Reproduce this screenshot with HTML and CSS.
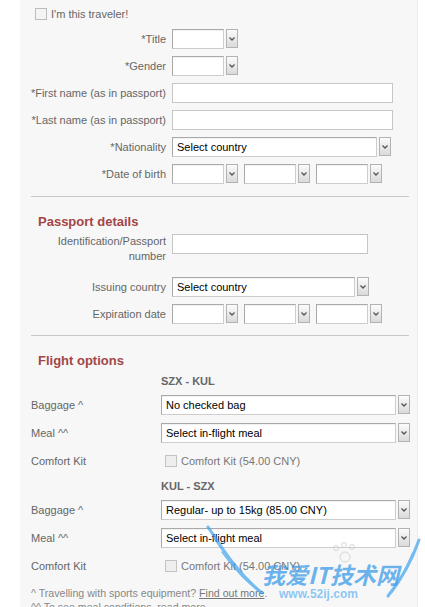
FILE: index.html
```html
<!DOCTYPE html>
<html>
<head>
<meta charset="utf-8">
<title>Traveler details</title>
<link rel="stylesheet" href="styles.css">
</head>
<body>
<div class="panel">
  <section class="traveler">
    <div class="me"><span class="cb"></span><span>I'm this traveler!</span></div>
    <div class="form">
      <div class="row"><span class="lbl">*Title</span><div class="fld"><span class="sel"><span class="box w52"></span><span class="btn"><svg width="6" height="4" viewBox="0 0 6 4"><polyline points="0.5,0.5 3,3 5.5,0.5" fill="none" stroke="#555" stroke-width="1.3"/></svg></span></span></div></div>
      <div class="row"><span class="lbl">*Gender</span><div class="fld"><span class="sel"><span class="box w52"></span><span class="btn"><svg width="6" height="4" viewBox="0 0 6 4"><polyline points="0.5,0.5 3,3 5.5,0.5" fill="none" stroke="#555" stroke-width="1.3"/></svg></span></span></div></div>
      <div class="row"><span class="lbl">*First name (as in passport)</span><div class="fld"><span class="inp w221"></span></div></div>
      <div class="row"><span class="lbl">*Last name (as in passport)</span><div class="fld"><span class="inp w221"></span></div></div>
      <div class="row"><span class="lbl">*Nationality</span><div class="fld"><span class="sel"><span class="box w205">Select country</span><span class="btn"><svg width="6" height="4" viewBox="0 0 6 4"><polyline points="0.5,0.5 3,3 5.5,0.5" fill="none" stroke="#555" stroke-width="1.3"/></svg></span></span></div></div>
      <div class="row"><span class="lbl">*Date of birth</span><div class="fld dates">
        <span class="sel"><span class="box w52"></span><span class="btn"><svg width="6" height="4" viewBox="0 0 6 4"><polyline points="0.5,0.5 3,3 5.5,0.5" fill="none" stroke="#555" stroke-width="1.3"/></svg></span></span>
        <span class="sel"><span class="box w52"></span><span class="btn"><svg width="6" height="4" viewBox="0 0 6 4"><polyline points="0.5,0.5 3,3 5.5,0.5" fill="none" stroke="#555" stroke-width="1.3"/></svg></span></span>
        <span class="sel"><span class="box w52"></span><span class="btn"><svg width="6" height="4" viewBox="0 0 6 4"><polyline points="0.5,0.5 3,3 5.5,0.5" fill="none" stroke="#555" stroke-width="1.3"/></svg></span></span>
      </div></div>
    </div>
  </section>

  <hr class="rule rule-1">

  <section class="passport">
    <h2 class="heading">Passport details</h2>
    <div class="form">
      <div class="row top tall"><span class="lbl">Identification/Passport<br>number</span><div class="fld"><span class="inp w196"></span></div></div>
      <div class="row"><span class="lbl">Issuing country</span><div class="fld"><span class="sel"><span class="box w183">Select country</span><span class="btn"><svg width="6" height="4" viewBox="0 0 6 4"><polyline points="0.5,0.5 3,3 5.5,0.5" fill="none" stroke="#555" stroke-width="1.3"/></svg></span></span></div></div>
      <div class="row"><span class="lbl">Expiration date</span><div class="fld dates">
        <span class="sel"><span class="box w52"></span><span class="btn"><svg width="6" height="4" viewBox="0 0 6 4"><polyline points="0.5,0.5 3,3 5.5,0.5" fill="none" stroke="#555" stroke-width="1.3"/></svg></span></span>
        <span class="sel"><span class="box w52"></span><span class="btn"><svg width="6" height="4" viewBox="0 0 6 4"><polyline points="0.5,0.5 3,3 5.5,0.5" fill="none" stroke="#555" stroke-width="1.3"/></svg></span></span>
        <span class="sel"><span class="box w52"></span><span class="btn"><svg width="6" height="4" viewBox="0 0 6 4"><polyline points="0.5,0.5 3,3 5.5,0.5" fill="none" stroke="#555" stroke-width="1.3"/></svg></span></span>
      </div></div>
    </div>
  </section>

  <hr class="rule rule-2">

  <section class="flight">
    <h2 class="heading">Flight options</h2>
    <div class="flist">
      <div class="frow route"><span></span><span>SZX - KUL</span></div>
      <div class="frow"><span class="flbl">Baggage ^</span><span class="sel"><span class="box w235">No checked bag</span><span class="btn"><svg width="6" height="4" viewBox="0 0 6 4"><polyline points="0.5,0.5 3,3 5.5,0.5" fill="none" stroke="#555" stroke-width="1.3"/></svg></span></span></div>
      <div class="frow"><span class="flbl">Meal ^^</span><span class="sel"><span class="box w235">Select in-flight meal</span><span class="btn"><svg width="6" height="4" viewBox="0 0 6 4"><polyline points="0.5,0.5 3,3 5.5,0.5" fill="none" stroke="#555" stroke-width="1.3"/></svg></span></span></div>
      <div class="frow"><span class="flbl">Comfort Kit</span><span class="kit"><span class="cb dis"></span><span>Comfort Kit (54.00 CNY)</span></span></div>

      <div class="frow route"><span></span><span>KUL - SZX</span></div>
      <div class="frow"><span class="flbl">Baggage ^</span><span class="sel"><span class="box w235">Regular- up to 15kg (85.00 CNY)</span><span class="btn"><svg width="6" height="4" viewBox="0 0 6 4"><polyline points="0.5,0.5 3,3 5.5,0.5" fill="none" stroke="#555" stroke-width="1.3"/></svg></span></span></div>
      <div class="frow"><span class="flbl">Meal ^^</span><span class="sel"><span class="box w235">Select in-flight meal</span><span class="btn"><svg width="6" height="4" viewBox="0 0 6 4"><polyline points="0.5,0.5 3,3 5.5,0.5" fill="none" stroke="#555" stroke-width="1.3"/></svg></span></span></div>
      <div class="frow"><span class="flbl">Comfort Kit</span><span class="kit"><span class="cb dis"></span><span>Comfort Kit (54.00 CNY)</span></span></div>
    </div>
    <div class="notes">
      <p>^ Travelling with sports equipment? <a href="#">Find out more</a>.</p>
      <p>^^ To see meal conditions, read more.</p>
    </div>
  </section>
</div>

<div class="watermark" aria-hidden="true">
  <svg class="wings" width="425" height="607" viewBox="0 0 425 607">
    <g fill="none" stroke="#3da3ef" stroke-linecap="round" opacity="0.7">
      <path d="M208,527 C222,548 238,574 262,593" stroke-width="3"/>
      <path d="M214,538 C228,558 242,577 258,590" stroke-width="2"/>
      <path d="M222,552 C234,568 246,582 256,588" stroke-width="1.5"/>
      <path d="M419,540 C411,563 401,580 388,596" stroke-width="3"/>
      <path d="M413,553 C406,570 399,582 392,592" stroke-width="2"/>
    </g>
    <g fill="none" stroke="#cfcfcf" stroke-width="1" opacity="0.8">
      <circle cx="345" cy="557" r="5"/>
      <circle cx="336" cy="548" r="2.5"/>
      <circle cx="344" cy="545" r="2.5"/>
      <circle cx="352" cy="547" r="2.5"/>
    </g>
  </svg>
  <span class="wm-title">我爱IT技术网</span>
  <span class="wm-url">www.52ij.com</span>
</div>
</body>
</html>
```

FILE: styles.css
```css
* { box-sizing: border-box; }

html, body {
  margin: 0;
  padding: 0;
}

body {
  background: #ffffff;
  font-family: "Liberation Sans", Arial, sans-serif;
  font-size: 11px;
  color: #666666;
  width: 425px;
  height: 607px;
  overflow: hidden;
  position: relative;
}

.panel {
  margin-left: 20px;
  width: 398px;
  height: 607px;
  background: #f7f7f7;
  border-right: 1px solid #ececec;
  overflow: hidden;
}

/* checkbox */
.cb {
  display: inline-block;
  width: 12px;
  height: 12px;
  border: 1px solid #bdbdbd;
  background: #f4f4f4;
  flex: none;
}

.traveler { padding-top: 8px; }

.me {
  display: flex;
  align-items: center;
  gap: 4px;
  margin-left: 15px;
  height: 12px;
  line-height: 12px;
}

.form {
  display: flex;
  flex-direction: column;
  gap: 7px;
}

.traveler .form { margin-top: 9px; }

.row {
  display: grid;
  grid-template-columns: 146px auto;
  column-gap: 6px;
  align-items: center;
  min-height: 20px;
}

.row.top { align-items: start; }
.row.tall { margin-bottom: 6px; }

.lbl {
  text-align: right;
  line-height: 15px;
  color: #666;
}

.fld { display: flex; }
.dates { gap: 6px; }

/* select look-alike */
.sel {
  display: inline-flex;
  gap: 2px;
  height: 20px;
}

.box {
  display: block;
  height: 20px;
  background: #ffffff;
  border: 1px solid;
  border-color: #a9a9a9 #cdcdcd #cdcdcd #a9a9a9;
  box-shadow: inset 0 1px 1px rgba(0, 0, 0, 0.06);
  padding-left: 4px;
  line-height: 18px;
  color: #000;
  font-size: 11px;
  white-space: nowrap;
  overflow: hidden;
}

.btn {
  width: 12px;
  height: 19px;
  border: 1px solid #b3b3b3;
  background: linear-gradient(#fbfbfb, #dadada);
  display: flex;
  align-items: center;
  justify-content: center;
}

.btn svg { display: block; }

.inp {
  display: block;
  height: 20px;
  background: #ffffff;
  border: 1px solid #c6c6c6;
}

.w52 { width: 52px; }
.w183 { width: 183px; }
.w196 { width: 196px; }
.w205 { width: 205px; }
.w221 { width: 221px; }
.w235 { width: 235px; }

/* dividers */
.rule {
  border: 0;
  border-top: 1px solid #c9c9c9;
  height: 0;
  margin: 0 8px 0 11px;
}

.rule-1 { margin-top: 12px; }
.rule-2 { margin-top: 11px; }

.heading {
  margin: 17px 0 4px 18px;
  font-size: 13px;
  line-height: 16px;
  font-weight: bold;
  color: #a24646;
}

/* flight options */
.flight .heading { margin-bottom: 5px; }

.flist {
  display: flex;
  flex-direction: column;
  gap: 8px;
}

.frow {
  display: grid;
  grid-template-columns: 130px auto;
  align-items: center;
  padding-left: 11px;
  min-height: 20px;
}

.frow.route {
  min-height: 14px;
  line-height: 14px;
  font-weight: bold;
  color: #666;
  margin-bottom: -1px;
}

.flbl { color: #666; }

.kit {
  display: flex;
  align-items: center;
  gap: 4px;
  padding-left: 4px;
  color: #777;
}

.cb.dis {
  background: #eeeeee;
  border-color: #c4c4c4;
}

.notes {
  margin-top: 10px;
  padding-left: 11px;
  color: #888;
  font-size: 10.6px;
}

.notes p {
  margin: 0;
  line-height: 14px;
}

.notes a {
  color: #777;
  text-decoration: underline;
}

/* watermark overlay */
.watermark {
  position: absolute;
  left: 0;
  top: 0;
  width: 425px;
  height: 607px;
  pointer-events: none;
}

.wings {
  position: absolute;
  left: 0;
  top: 0;
}

.wm-title {
  position: absolute;
  left: 262px;
  top: 563px;
  font-family: "Noto Sans CJK SC", sans-serif;
  font-weight: bold;
  font-style: italic;
  font-size: 23px;
  line-height: 22px;
  height: 22px;
  color: rgba(52, 152, 232, 0.72);
  white-space: nowrap;
}

.wm-url {
  position: absolute;
  left: 279px;
  top: 588px;
  font-family: "Liberation Sans", Arial, sans-serif;
  font-weight: bold;
  font-size: 12px;
  line-height: 12px;
  color: rgba(80, 170, 240, 0.65);
  white-space: nowrap;
}
```
